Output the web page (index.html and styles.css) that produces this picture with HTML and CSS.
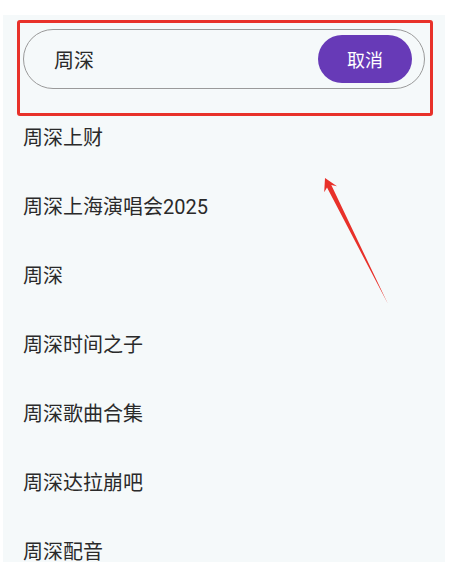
FILE: index.html
```html
<!DOCTYPE html>
<html lang="zh-CN">
<head>
  <meta charset="UTF-8" />
  <title>搜索</title>
  <link rel="stylesheet" href="styles.css">
</head>
<body>

<main class="panel">
  <div class="search">
    <div class="search-box">
      <span class="query">周深</span>
      <button class="cancel">取消</button>
    </div>
  </div>

  <ul class="suggest">
    <li>周深上财</li>
    <li>周深上海演唱会2025</li>
    <li>周深</li>
    <li>周深时间之子</li>
    <li>周深歌曲合集</li>
    <li>周深达拉崩吧</li>
    <li>周深配音</li>
  </ul>
</main>

<!-- annotation marks -->
<div class="mark-box"></div>
<svg class="mark-arrow" width="456" height="562" viewBox="0 0 456 562">
  <polygon points="325,178 337,186.2 331.3,185 388,304 327,187.6 324.2,192.2" fill="#e8312a" />
</svg>

</body>
</html>
```

FILE: styles.css
```css
html, body {
  margin: 0;
  padding: 0;
  height: 100%;
  overflow: hidden;
}
body {
  font-family: Roboto, "Noto Sans CJK SC", sans-serif;
  background: #fff;
  color: #2a2a2a;
}
.panel {
  margin: 15px 11px 0 3px;
  height: calc(100vh - 15px);
  background: #f5f9fa;
}
.search {
  padding: 14px 20px 15px;
}
.search-box {
  display: flex;
  align-items: center;
  justify-content: space-between;
  height: 58px;
  border: 1px solid #9a9a9a;
  border-radius: 30px;
  padding: 0 12px 0 30px;
}
.query {
  font-size: 20px;
}
.cancel {
  width: 94px;
  height: 48px;
  border: none;
  border-radius: 24px;
  background: #673ab7;
  color: #fff;
  font-family: inherit;
  font-size: 18px;
  cursor: pointer;
}
.suggest {
  list-style: none;
  margin: 0;
  padding: 0 20px;
}
.suggest li {
  height: 69px;
  line-height: 69px;
  font-size: 20px;
}
.mark-box {
  position: absolute;
  left: 17px;
  top: 20px;
  width: 410px;
  height: 90px;
  border: 3px solid #e8312a;
  border-radius: 3px;
}
.mark-arrow {
  position: absolute;
  left: 0;
  top: 0;
}
```
